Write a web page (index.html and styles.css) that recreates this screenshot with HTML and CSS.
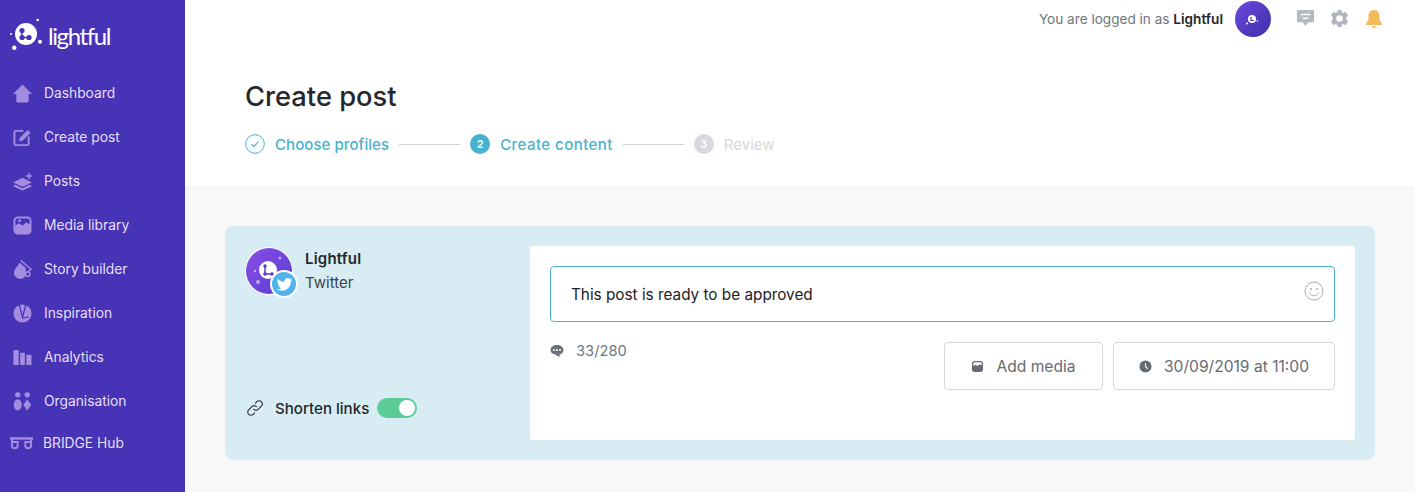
FILE: index.html
```html
<!DOCTYPE html>
<html>
<head>
    <meta charset="UTF-8">
    <title>Create post</title>
    <link rel="stylesheet" href="styles.css">
</head>
<body>
    <div class="page">
        <aside class="sidebar">
            <div class="logo">
                <svg class="logo-mark" viewBox="0 0 40 34">
                    <circle cx="17" cy="16" r="11" fill="#fff"/>
                    <circle cx="28.700" cy="2" r="1.300" fill="#fff"/>
                    <circle cx="2" cy="16" r="1" fill="#fff"/>
                    <circle cx="5.300" cy="29.700" r="2.200" fill="#fff"/>
                    <circle cx="31" cy="23.700" r="2" fill="#fff"/>
                    <path d="M13 12.500v7h7" fill="none" stroke="#4733b5" stroke-width="1.500"/>
                    <circle cx="13" cy="12.500" r="2.600" fill="#4733b5"/>
                    <circle cx="13" cy="19.500" r="2.600" fill="#4733b5"/>
                    <circle cx="20" cy="19.500" r="2.600" fill="#4733b5"/>
                </svg>
                <span class="logo-text">lightful</span>
            </div>
            <nav class="nav">
                <a class="nav-item">
                    <svg class="nav-icon" viewBox="0 0 20 20"><path d="M10 0.500 20 10.500h-3.500v7a2 2 0 0 1-2 2h-9a2 2 0 0 1-2-2v-7H0z"/></svg>
                    Dashboard
                </a>
                <a class="nav-item">
                    <svg class="nav-icon" viewBox="0 0 20 20"><path d="M11 3H3a1.500 1.500 0 0 0-1.500 1.500v12A1.500 1.500 0 0 0 3 18h12a1.500 1.500 0 0 0 1.500-1.500V9" fill="none" stroke="#a48de0" stroke-width="2"/><path d="M7 10.500 15.500 2l3 3-8.500 8.500-3.500.5z"/></svg>
                    Create post
                </a>
                <a class="nav-item">
                    <svg class="nav-icon" viewBox="0 0 20 20"><path d="M10 6 20 11 10 15.500 0 11z"/><path d="M2.500 13.500 10 17l7.500-3.500 2.500 1.500-10 4.500L0 15zM16 1h1.500v2.500H20V5h-2.500v2.500H16V5h-2.500V3.500H16z"/></svg>
                    Posts
                </a>
                <a class="nav-item">
                    <svg class="nav-icon" viewBox="0 0 20 20"><path fill-rule="evenodd" d="M5 0.500h10a4.500 4.500 0 0 1 4.500 4.500v10a4.500 4.500 0 0 1-4.500 4.500H5A4.500 4.500 0 0 1 .5 15V5A4.500 4.500 0 0 1 5 .5zM2.500 10 6 7.500l4 2.500L14 6.500l3.500 2.500V5A2.500 2.500 0 0 0 15 2.500H5A2.500 2.500 0 0 0 2.500 5z"/><circle cx="7" cy="5" r="1.500"/></svg>
                    Media library
                </a>
                <a class="nav-item">
                    <svg class="nav-icon" viewBox="0 0 20 20"><path d="M7 3 13 8 14 14A6.500 6.500 0 1 1 2 10z"/><path d="M8 .5 19 9.500 15.500 13" fill="none" stroke="#a48de0" stroke-width="1.500"/><circle cx="15.500" cy="15" r="2.300" fill="none" stroke="#a48de0" stroke-width="1.500"/></svg>
                    Story builder
                </a>
                <a class="nav-item">
                    <svg class="nav-icon" viewBox="0 0 20 20"><circle cx="10" cy="10" r="9.500"/><path d="M6.500 0.500 10 14l3.500-13.500M10 14c1.500 1.500 3 0 6.500-.5" fill="none" stroke="#4733b5" stroke-width="1.300"/></svg>
                    Inspiration
                </a>
                <a class="nav-item">
                    <svg class="nav-icon" viewBox="0 0 20 20"><rect x=".5" y="2" width="5.500" height="16" rx="1"/><rect x="7.500" y="5" width="5" height="13" rx="1"/><rect x="14" y="7" width="5.500" height="11" rx="1"/></svg>
                    Analytics
                </a>
                <a class="nav-item">
                    <svg class="nav-icon" viewBox="0 0 20 20"><circle cx="5" cy="3" r="2.800"/><circle cx="15" cy="3" r="2.800"/><ellipse cx="5" cy="13.500" rx="4.200" ry="6"/><path d="M15 7.500l4.200 6-4.200 6-4.200-6z"/></svg>
                    Organisation
                </a>
                <a class="nav-item nav-item-hub">
                    <svg class="nav-icon-hub" viewBox="0 0 24 14"><path d="M0 1h24v2.500H0z"/><path fill-rule="evenodd" d="M1 3h2v2h6v4.500a4 4 0 0 1-8 0zM3 9.500a2 2 0 1 0 4 0V7H3zM23 3h-2v2h-6v4.500a4 4 0 0 0 8 0zM21 9.500a2 2 0 1 1-4 0V7h4z"/></svg>
                    BRIDGE Hub
                </a>
            </nav>
        </aside>

        <main class="main">
            <header class="topbar">
                <span class="logged">You are logged in as <b>Lightful</b></span>
                <svg class="user-avatar" viewBox="0 0 36 36">
                    <defs><linearGradient id="av" x1="0" y1="0" x2="1" y2="1"><stop offset="0" stop-color="#6c48e0"/><stop offset="1" stop-color="#3f2fa8"/></linearGradient></defs>
                    <circle cx="18" cy="18" r="18" fill="url(#av)"/>
                    <circle cx="17" cy="18" r="4" fill="#fff"/>
                    <path d="M16 16v3.500h3" fill="none" stroke="#4733b5" stroke-width="1.200"/>
                    <circle cx="12" cy="22.500" r="1" fill="#fff"/>
                    <circle cx="22.500" cy="20" r=".8" fill="#fff"/>
                </svg>
                <svg class="top-icon top-icon-first" viewBox="0 0 20 20"><path fill="#b4bac2" d="M2 1h16a1 1 0 0 1 1 1v11a1 1 0 0 1-1 1h-5l-3 4-3-4H2a1 1 0 0 1-1-1V2a1 1 0 0 1 1-1z"/><path fill="#fff" d="M5 5h10v1.500H5zM7 9h6v1.500H7z"/></svg>
                <svg class="top-icon" viewBox="0 0 20 20"><path fill="#b0b6be" fill-rule="evenodd" d="M8 1h4l.5 2.500 1.500.7L16.300 3 19 6.500l-1.700 2v3l1.700 2-2.700 3.500-2.300-1.200-1.500.7L12 19H8l-.5-2.500-1.500-.7L3.700 17 1 13.500l1.700-2v-3L1 6.500 3.700 3 6 4.200l1.500-.7zM10 6.500a3.500 3.500 0 1 0 0 7 3.500 3.500 0 0 0 0-7z"/></svg>
                <svg class="top-icon top-icon-bell" viewBox="0 0 20 20"><path fill="#f4b95a" d="M10 1c3.500 0 5.500 2.800 5.500 6v4l2.500 4v1H2v-1l2.500-4V7c0-3.200 2-6 5.500-6z"/><path fill="#f4b95a" d="M7.500 17h5L10 19.500z"/></svg>
            </header>

            <section class="heading">
                <h1>Create post</h1>
                <div class="steps">
                    <svg class="step-check" viewBox="0 0 20 20"><circle cx="10" cy="10" r="9.300" fill="none" stroke="#45b3cf" stroke-width="1"/><path d="M6.500 10.200 9 12.500l4.500-4.800" fill="none" stroke="#45b3cf" stroke-width="1.200"/></svg>
                    <span class="step-label">Choose profiles</span>
                    <span class="step-line"></span>
                    <span class="step-num">2</span>
                    <span class="step-label step-label-current">Create content</span>
                    <span class="step-line"></span>
                    <span class="step-num step-num-off">3</span>
                    <span class="step-label step-label-off">Review</span>
                </div>
            </section>

            <section class="content">
                <div class="card">
                    <div class="card-side">
                        <div class="profile">
                            <div class="avatar-wrap">
                                <svg class="avatar" viewBox="0 0 48 48">
                                    <defs><linearGradient id="pa" x1="0" y1="0" x2="1" y2="1"><stop offset="0" stop-color="#8a4fe6"/><stop offset="1" stop-color="#5a3cd0"/></linearGradient></defs>
                                    <circle cx="24" cy="24" r="24" fill="#fff"/>
                                    <circle cx="24" cy="24" r="23" fill="url(#pa)"/>
                                    <circle cx="23" cy="23" r="9" fill="#fff"/>
                                    <path d="M20 19v8h7" fill="none" stroke="#5a3cd0" stroke-width="1.500"/>
                                    <circle cx="20" cy="19" r="1.800" fill="#5a3cd0"/>
                                    <circle cx="20" cy="27" r="1.800" fill="#5a3cd0"/>
                                    <circle cx="27" cy="27" r="1.800" fill="#5a3cd0"/>
                                    <circle cx="35" cy="11" r="1.500" fill="#c5a8f5"/>
                                    <circle cx="10" cy="24" r="1.200" fill="#c5a8f5"/>
                                    <circle cx="13" cy="35" r="2" fill="#c5a8f5"/>
                                </svg>
                                <span class="twitter-badge">
                                    <svg viewBox="0 0 24 24" width="17" height="17"><path fill="#fff" d="M23 5.100c-.8.400-1.700.6-2.600.7.900-.6 1.600-1.400 2-2.500-.9.500-1.800.9-2.900 1.100A4.500 4.500 0 0 0 11.800 8.500C8 8.300 4.700 6.500 2.500 3.800c-1.200 2-.6 4.600 1.400 6-.7 0-1.400-.2-2-.6 0 2.200 1.500 4.100 3.600 4.500-.7.200-1.400.2-2 .1.600 1.800 2.200 3.100 4.200 3.100A9.100 9.100 0 0 1 1 18.800 12.800 12.800 0 0 0 8 20.900c8.400 0 13.200-7.100 12.900-13.500.9-.6 1.600-1.400 2.100-2.300z"/></svg>
                                </span>
                            </div>
                            <div class="profile-text">
                                <div class="profile-name">Lightful</div>
                                <div class="profile-net">Twitter</div>
                            </div>
                        </div>
                        <div class="shorten">
                            <svg class="link-icon" viewBox="0 0 20 20"><g fill="none" stroke="#30343a" stroke-width="1.300" stroke-linecap="round"><path d="M8.500 11.500a3.500 3.500 0 0 0 5 0l3.500-3.500a3.500 3.500 0 0 0-5-5l-1.500 1.500"/><path d="M11.500 8.500a3.500 3.500 0 0 0-5 0L3 12a3.500 3.500 0 0 0 5 5l1.500-1.500"/></g></svg>
                            <span class="shorten-label">Shorten links</span>
                            <span class="toggle"><span class="knob"></span></span>
                        </div>
                    </div>
                    <div class="composer">
                        <div class="textbox">
                            <span>This post is ready to be approved</span>
                            <svg class="smile" viewBox="0 0 20 20"><g fill="none" stroke="#a9aeb5" stroke-width="1"><circle cx="10" cy="10" r="9"/><path d="M5.500 11.500c1 2.500 3 3.300 4.500 3.300s3.500-.8 4.500-3.300"/></g><circle cx="7" cy="8" r="1" fill="#a9aeb5"/><circle cx="13" cy="8" r="1" fill="#a9aeb5"/></svg>
                        </div>
                        <div class="composer-foot">
                            <div class="counter">
                                <svg class="counter-icon" viewBox="0 0 14 14"><path fill="#6b7279" d="M7 1c3.500 0 6.500 2 6.500 5S10.500 10.500 9.500 10.500V13c-1.500-.5-3-1.500-4-2.500C3 10.300.5 8.800.5 6 .5 3 3.500 1 7 1z"/><circle cx="4" cy="6" r="1" fill="#fff"/><circle cx="7" cy="6" r="1" fill="#fff"/><circle cx="10" cy="6" r="1" fill="#fff"/></svg>
                                33/280
                            </div>
                            <div class="actions">
                                <button class="btn btn-media">
                                    <svg class="btn-icon" viewBox="0 0 14 14"><path fill="#666c73" fill-rule="evenodd" d="M4 1h6a3 3 0 0 1 3 3v6a3 3 0 0 1-3 3H4a3 3 0 0 1-3-3V4a3 3 0 0 1 3-3zM2.500 6.500 5 5l2 1.500L9.500 4.500l2 1.500V4A1.500 1.500 0 0 0 10 2.500H4A1.500 1.500 0 0 0 2.500 4z"/></svg>
                                    Add media
                                </button>
                                <button class="btn btn-date">
                                    <svg class="btn-icon" viewBox="0 0 14 14"><circle cx="7" cy="7" r="6.500" fill="#666c73"/><path d="M7 3.500V7l2.500 2.500" fill="none" stroke="#fff" stroke-width="1.200"/></svg>
                                    30/09/2019 at 11:00
                                </button>
                            </div>
                        </div>
                    </div>
                </div>
            </section>
        </main>
    </div>
</body>
</html>
```

FILE: styles.css
```css
* { box-sizing: border-box; }
html, body { height: 100%; }
body { margin: 0; font-family: "Inter", "Liberation Sans", sans-serif; color: #24272c; background: #f7f8fa; overflow: hidden; }

.page { display: flex; height: 492px; }

/* sidebar */
.sidebar { width: 185px; flex: none; background: #4733b5; padding-top: 18px; }
.logo { display: flex; align-items: flex-start; padding-left: 9px; height: 53px; }
.logo-mark { width: 40px; height: 34px; flex: none; }
.logo-text { font-family: "Lato", sans-serif; font-weight: 400; font-size: 24px; line-height: 36px; color: #fff; margin-left: -1px; letter-spacing: -1.400px; }
.nav { display: flex; flex-direction: column; }
.nav-item { display: flex; align-items: center; height: 44px; padding-left: 13px; color: #e6dff8; font-size: 13.800px; }
.nav-icon { width: 19px; height: 19px; margin-right: 12px; fill: #a48de0; flex: none; }
.nav-item-hub { height: 40px; padding-left: 10px; }
.nav-icon-hub { width: 23px; height: 14px; margin-right: 10px; fill: #a48de0; flex: none; }

/* top */
.main { flex: 1; display: flex; flex-direction: column; min-width: 0; }
.topbar { display: flex; align-items: center; justify-content: flex-end; height: 37px; background: #fff; padding-right: 31px; }
.logged { font-size: 13.600px; color: #6f767d; }
.logged b { color: #24272c; font-weight: 600; }
.user-avatar { width: 36px; height: 36px; margin-left: 12px; }
.top-icon { width: 19px; height: 19px; margin-left: 15px; }
.top-icon-first { margin-left: 25px; }
.top-icon-bell { width: 20px; height: 20px; }

.heading { background: #fff; height: 149px; padding: 43px 0 0 60px; }
h1 { margin: 0; font-size: 27.300px; line-height: 34px; font-weight: 500; color: #24272c; }
.steps { display: flex; align-items: center; margin-top: 19px; height: 22px; }
.step-check { width: 20px; height: 20px; margin-right: 10px; }
.step-label { font-size: 15px; font-weight: 500; color: #45b3cf; letter-spacing: .07px; }
.step-label-current { letter-spacing: .45px; }
.step-label-off { color: #d5d8dd; font-weight: 400; letter-spacing: 0; }
.step-line { width: 61px; height: 1px; background: #ccd0d6; margin: 0 10px; }
.step-num { width: 20px; height: 20px; border-radius: 50%; background: #45b3cf; color: #fff; font-size: 11px; font-weight: 600; display: flex; align-items: center; justify-content: center; margin-right: 10px; }
.step-num-off { background: #d5d8dd; }

/* card */
.content { flex: 1; padding: 40px 40px 0; }
.card { display: flex; height: 234px; background: #d7edf3; border-radius: 8px; padding: 20px; }
.card-side { width: 285px; flex: none; display: flex; flex-direction: column; justify-content: space-between; padding-bottom: 22px; }
.profile { display: flex; }
.avatar-wrap { position: relative; width: 48px; height: 48px; margin-top: 1px; }
.avatar { width: 48px; height: 48px; display: block; }
.twitter-badge { position: absolute; left: 25px; top: 23px; width: 28px; height: 28px; border-radius: 50%; background: #50b4ec; border: 2px solid #fff; display: flex; align-items: center; justify-content: center; }
.profile-text { margin-left: 12px; padding-top: 1px; }
.profile-name { font-size: 15px; line-height: 24px; font-weight: 600; color: #24272c; letter-spacing: .2px; }
.profile-net { font-size: 15px; line-height: 24px; color: #3d4248; }
.shorten { display: flex; align-items: center; height: 20px; }
.link-icon { width: 18px; height: 18px; margin: 0 1px 0 1px; }
.shorten-label { font-size: 15.100px; font-weight: 500; margin-left: 10px; color: #24272c; }
.toggle { width: 40px; height: 20px; border-radius: 10px; background: #5dcb98; margin-left: 8px; position: relative; }
.knob { position: absolute; right: 2px; top: 2px; width: 16px; height: 16px; border-radius: 50%; background: #fff; }

.composer { flex: 1; background: #fff; border-radius: 3px; padding: 20px; }
.textbox { display: flex; align-items: center; justify-content: space-between; height: 56px; border: 1px solid #45b3cf; border-radius: 4px; padding: 0 10px 0 20px; font-size: 15.300px; color: #1d2024; }
.smile { width: 20px; height: 20px; margin-bottom: 7px; }
.composer-foot { display: flex; justify-content: space-between; margin-top: 20px; }
.counter { display: flex; align-items: center; height: 18px; font-size: 14.700px; color: #6f767d; }
.counter-icon { width: 14px; height: 14px; margin-right: 12px; }
.actions { display: flex; gap: 10px; }
.btn { display: flex; align-items: center; justify-content: center; height: 48px; background: #fff; border: 1px solid #d5d8dc; border-radius: 4px; font-family: inherit; font-size: 15.600px; font-weight: 400; color: #666c73; }
.btn-media { width: 159px; }
.btn-date { width: 222px; }
.btn-icon { width: 13px; height: 13px; margin-right: 12px; }
```
